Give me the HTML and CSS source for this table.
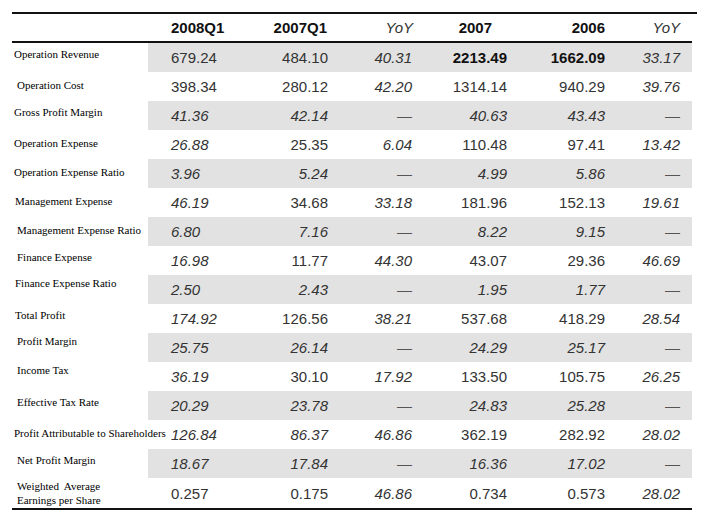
FILE: index.html
```html
<!DOCTYPE html>
<html lang="en">
<head>
<meta charset="utf-8">
<title>Financial Summary</title>
<link rel="stylesheet" href="styles.css">
</head>
<body>
<div class="frame">
  <div class="sheet">
    <table class="fin">
      <colgroup>
        <col class="w-lbl"><col class="w-c1"><col class="w-c2"><col class="w-c3"><col class="w-c4"><col class="w-c5"><col class="w-c6">
      </colgroup>
      <thead>
        <tr>
          <th class="lbl"></th>
          <th class="c1">2008Q1</th>
          <th class="c2">2007Q1</th>
          <th class="c3 yoy">YoY</th>
          <th class="c4">2007</th>
          <th class="c5">2006</th>
          <th class="c6 yoy">YoY</th>
        </tr>
      </thead>
      <tbody>
        <tr class="g">
          <td class="lbl">Operation Revenue</td>
          <td class="num c1">679.24</td><td class="num">484.10</td><td class="num i">40.31</td><td class="num b">2213.49</td><td class="num b">1662.09</td><td class="num i c6">33.17</td>
        </tr>
        <tr>
          <td class="lbl ind low">Operation Cost</td>
          <td class="num c1">398.34</td><td class="num">280.12</td><td class="num i">42.20</td><td class="num">1314.14</td><td class="num">940.29</td><td class="num i c6">39.76</td>
        </tr>
        <tr class="g">
          <td class="lbl">Gross Profit Margin</td>
          <td class="num c1 i">41.36</td><td class="num i">42.14</td><td class="num dash">—</td><td class="num i">40.63</td><td class="num i">43.43</td><td class="num dash c6">—</td>
        </tr>
        <tr>
          <td class="lbl low">Operation Expense</td>
          <td class="num c1 i">26.88</td><td class="num">25.35</td><td class="num i">6.04</td><td class="num">110.48</td><td class="num">97.41</td><td class="num i c6">13.42</td>
        </tr>
        <tr class="g">
          <td class="lbl low">Operation Expense Ratio</td>
          <td class="num c1 i">3.96</td><td class="num i">5.24</td><td class="num dash">—</td><td class="num i">4.99</td><td class="num i">5.86</td><td class="num dash c6">—</td>
        </tr>
        <tr>
          <td class="lbl low mid">Management Expense</td>
          <td class="num c1 i">46.19</td><td class="num">34.68</td><td class="num i">33.18</td><td class="num">181.96</td><td class="num">152.13</td><td class="num i c6">19.61</td>
        </tr>
        <tr class="g">
          <td class="lbl ind low">Management Expense Ratio</td>
          <td class="num c1 i">6.80</td><td class="num i">7.16</td><td class="num dash">—</td><td class="num i">8.22</td><td class="num i">9.15</td><td class="num dash c6">—</td>
        </tr>
        <tr>
          <td class="lbl ind">Finance Expense</td>
          <td class="num c1 i">16.98</td><td class="num">11.77</td><td class="num i">44.30</td><td class="num">43.07</td><td class="num">29.36</td><td class="num i c6">46.69</td>
        </tr>
        <tr class="g">
          <td class="lbl mid high">Finance Expense Ratio</td>
          <td class="num c1 i">2.50</td><td class="num i">2.43</td><td class="num dash">—</td><td class="num i">1.95</td><td class="num i">1.77</td><td class="num dash c6">—</td>
        </tr>
        <tr>
          <td class="lbl mid">Total Profit</td>
          <td class="num c1 i">174.92</td><td class="num">126.56</td><td class="num i">38.21</td><td class="num">537.68</td><td class="num">418.29</td><td class="num i c6">28.54</td>
        </tr>
        <tr class="g">
          <td class="lbl ind high">Profit Margin</td>
          <td class="num c1 i">25.75</td><td class="num i">26.14</td><td class="num dash">—</td><td class="num i">24.29</td><td class="num i">25.17</td><td class="num dash c6">—</td>
        </tr>
        <tr>
          <td class="lbl ind high">Income Tax</td>
          <td class="num c1 i">36.19</td><td class="num">30.10</td><td class="num i">17.92</td><td class="num">133.50</td><td class="num">105.75</td><td class="num i c6">26.25</td>
        </tr>
        <tr class="g">
          <td class="lbl ind">Effective Tax Rate</td>
          <td class="num c1 i">20.29</td><td class="num i">23.78</td><td class="num dash">—</td><td class="num i">24.83</td><td class="num i">25.28</td><td class="num dash c6">—</td>
        </tr>
        <tr>
          <td class="lbl low">Profit Attributable to Shareholders</td>
          <td class="num c1 i">126.84</td><td class="num i">86.37</td><td class="num i">46.86</td><td class="num">362.19</td><td class="num">282.92</td><td class="num i c6">28.02</td>
        </tr>
        <tr class="g">
          <td class="lbl ind">Net Profit Margin</td>
          <td class="num c1 i">18.67</td><td class="num i">17.84</td><td class="num dash">—</td><td class="num i">16.36</td><td class="num i">17.02</td><td class="num dash c6">—</td>
        </tr>
        <tr class="last">
          <td class="lbl ind two">Weighted&nbsp; Average<br>Earnings per Share</td>
          <td class="num c1">0.257</td><td class="num">0.175</td><td class="num i">46.86</td><td class="num">0.734</td><td class="num">0.573</td><td class="num i c6">28.02</td>
        </tr>
      </tbody>
    </table>
  </div>
</div>
</body>
</html>
```
FILE: styles.css
```css
html, body {
  background: #ffffff;
}
body {
  margin: 8px;
  font-family: "Liberation Sans", Arial, sans-serif;
}
.frame {
  width: 699px;
  height: 507px;
  box-sizing: border-box;
  padding: 4px 0 0 4px;
  background: #ffffff;
  box-shadow: 0 0 3px rgba(0, 0, 0, 0.22), 3px 4px 7px rgba(0, 0, 0, 0.42);
}
.sheet {
  width: 685px;
  border-top: 2px solid #111111;
}
.fin {
  width: 680px;
  table-layout: fixed;
  border-collapse: separate;
  border-spacing: 0;
}
.w-lbl { width: 136px; }
.w-c1 { width: 92px; }
.w-c2 { width: 98px; }
.w-c3 { width: 84px; }
.w-c4 { width: 95px; }
.w-c5 { width: 98px; }
.w-c6 { width: 77px; }

.fin thead tr { height: 29px; }
.fin th {
  padding: 0 10px 0 0;
  border-bottom: 2px solid #111111;
  font: bold 15px "Liberation Sans", Arial, sans-serif;
  color: #111111;
  text-align: right;
  vertical-align: middle;
}
.fin th.c1 { text-align: left; padding-left: 23px; padding-right: 0; }
.fin th.c2 { padding-right: 11px; }
.fin th.c3 { padding-right: 9px; }
.fin th.c4 { padding-right: 25px; }
.fin th.c6 { padding-right: 12px; }
.fin th.yoy {
  font-weight: normal;
  font-style: italic;
  color: #333333;
}

.fin tbody tr { height: 29px; }
.fin tbody tr.last { height: 32px; }
.fin tbody tr.last td { border-bottom: 2px solid #111111; }

.lbl {
  padding: 5px 0 0 2px;
  vertical-align: top;
  white-space: nowrap;
  font-family: "Liberation Serif", "Times New Roman", serif;
  font-size: 11px;
  line-height: 13px;
  color: #000000;
  background: #ffffff;
}
.lbl.ind { padding-left: 5px; }
.lbl.mid { padding-left: 3px; }
.lbl.low { padding-top: 7px; }
.lbl.high { padding-top: 2px; }
.lbl.two { padding-top: 1px; line-height: 14px; }

.num {
  padding: 0 10px 0 0;
  text-align: right;
  vertical-align: middle;
  font-size: 15px;
  color: #333333;
  white-space: nowrap;
}
.num.c1 { text-align: left; padding-left: 23px; padding-right: 0; }
.num.c6 { padding-right: 12px; }
.num.i { font-style: italic; }
.num.b { font-weight: bold; color: #111111; }
.num.dash { color: #555555; }

.fin tr.g td.num { background: #e2e2e2; }
```
